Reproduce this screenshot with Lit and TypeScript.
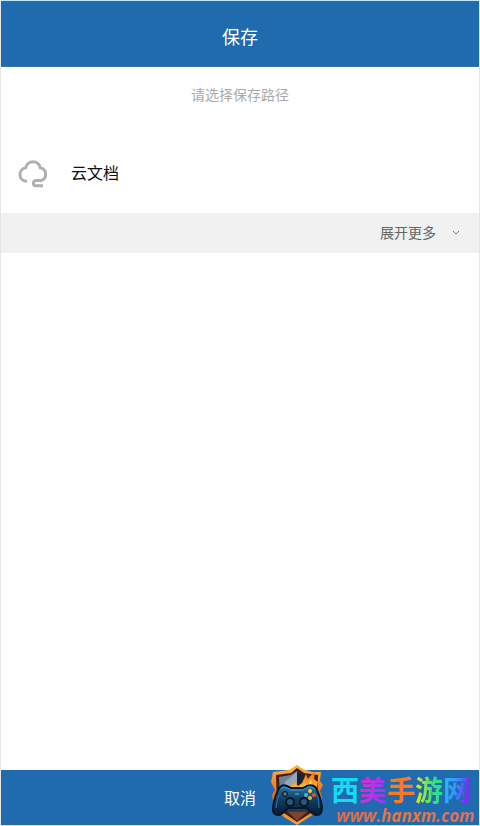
import { LitElement, html, css } from "lit";
import { customElement } from "lit/decorators.js";

@customElement("brand-mark")
class BrandMark extends LitElement {
  static styles = css`
    :host { display: flex; align-items: flex-end; gap: 6px; }
    .shield { width: 56px; height: 60px; display: block; }
    .words { display: flex; flex-direction: column; align-items: flex-end; }
    .name {
      display: flex;
      padding-right: 4px;
      font: 700 28px/36px "Noto Sans CJK SC", sans-serif;
      white-space: nowrap;
    }
    .c1 { color: #10dcf4; }
    .c2 { background: linear-gradient(100deg, #e52bd5, #8a3cf5); }
    .c3 { color: #ff7a1c; }
    .c4 { background: linear-gradient(90deg, #f3e51e, #3fe36b 60%, #20dba8); }
    .c5 { background: linear-gradient(100deg, #20c8f4, #3c8cff 50%, #7a2cf5 80%); }
    .c2, .c4, .c5 { color: transparent; background-clip: text; -webkit-background-clip: text; }
    .site {
      display: block;
      font: italic 700 17px/18px "Open Sans", "Noto Sans", sans-serif;
      color: transparent;
      background: linear-gradient(90deg, #e86a4c, #f5763a 50%, #e5705c);
      background-clip: text;
      -webkit-background-clip: text;
      text-decoration: none;
      white-space: nowrap;
    }
  `;
  render() {
    return html`
      <svg class="shield" viewBox="0 0 56 60" aria-hidden="true">
        <defs>
          <linearGradient id="rim" x1="0" y1="0" x2="0" y2="1">
            <stop offset="0" stop-color="#ffb53c" /><stop offset=".5" stop-color="#f26a16" /><stop offset="1" stop-color="#ffa12e" />
          </linearGradient>
          <linearGradient id="fire" x1="0" y1="0" x2="0" y2="1">
            <stop offset="0" stop-color="#f4680c" /><stop offset="1" stop-color="#ffd04a" />
          </linearGradient>
          <linearGradient id="pad" x1="0" y1="0" x2="0" y2="1">
            <stop offset="0" stop-color="#2d79ae" /><stop offset=".45" stop-color="#134063" /><stop offset="1" stop-color="#071a31" />
          </linearGradient>
        </defs>
        <path d="M28 0 34 4 43 7 52 7 51 16 54 20 51 26 53 32 50 43 42 51 28 60 15 52 5 42 3 30 6 25 2 17 4 7 20 5Z" fill="url(#rim)" />
        <path d="M28 3 35 8 49 10 48 38 42 48 28 57 15 48 8 38 7 10 22 8Z" fill="#421c19" />
        <path d="M28 6 35 10 46 12 45 37 40 46 28 54 17 46 11 37 10 12 22 10Z" fill="#27394c" />
        <path d="M28 6 22 10 10 12 11 30 28 22Z" fill="#6e8296" />
        <path d="M28 7V22L15 30 16 17Z" fill="#98a8b3" />
        <path d="M28 7 40 12 38 24H28Z" fill="#182431" />
        <path d="M15 25 19 20 22 21 26 17 29 21 33 18 37 9 39 14 42 10 46 7 45 14 49 17 46 28 35 25 24 26Z" fill="url(#fire)" />
        <path d="M32 23 36 19 39 21 42 14 43 21 46 23 43 27Z" fill="#ffd85a" />
        <path d="M19 47H38L28 56Z" fill="#7b4332" />
        <path d="M11 22Q14 19 18 21L22 23H34L38 21Q44 19 47 23Q51 30 53 42Q53 50 48 50Q44 50 38 43H19Q12 51 8 50Q3 49 4 42Q6 29 11 22Z" fill="url(#pad)" stroke="#06182b" stroke-width="2" />
        <path d="M12 24Q14 21 18 23L22 25H34L39 22Q43 21 46 24" fill="none" stroke="#4599c9" />
        <path d="M13 29H19M16 26V32" stroke="#09182a" stroke-width="3" />
        <path d="M14 29H18M16 27V31" stroke="#7694ab" />
        <circle cx="21" cy="37" r="5" fill="#07172a" /><circle cx="21" cy="37" r="3" fill="#285779" />
        <circle cx="35" cy="37" r="5" fill="#07172a" /><circle cx="35" cy="37" r="3" fill="#285779" />
        <circle cx="41" cy="26" r="2" fill="#ffc928" /><circle cx="45" cy="30" r="2" fill="#f34e32" />
        <circle cx="37" cy="30" r="2" fill="#43b6e6" /><circle cx="41" cy="33" r="2" fill="#efb33c" />
        <path d="M26 29H30" stroke="#72b8d8" />
        <path d="M7 43Q8 34 10 30M50 43Q50 34 48 30" fill="none" stroke="#2b78a7" />
      </svg>
      <div class="words">
        <span class="name"><span class="c1">西</span><span class="c2">美</span><span class="c3">手</span><span class="c4">游</span><span class="c5">网</span></span>
        <a class="site" href="#">www.hanxm.com</a>
      </div>
    `;
  }
}

@customElement("app-root")
class AppRoot extends LitElement {
  static styles = css`
    :host {
      display: flex;
      flex-direction: column;
      box-sizing: border-box;
      min-height: 100vh;
      border: 1px solid #e6e6e6;
      border-top-color: #bfeafa;
      border-bottom-color: #bfeafa;
      background: #fff;
      font-family: "Noto Sans CJK SC", sans-serif;
    }
    button { border: 0; margin: 0; padding: 0 0 2px; background: none; font: inherit; cursor: pointer; }
    header {
      display: flex;
      align-items: center;
      justify-content: center;
      box-sizing: border-box;
      height: 66px;
      padding-top: 4px;
      background: #1f6bad;
      border-bottom: 1px solid #3a75a8;
    }
    h1 { margin: 0; font-size: 18px; line-height: 26px; font-weight: 400; color: #fff; }
    main { flex: 1; }
    .hint { margin: 0; padding: 17px 0 29px; font-size: 14px; line-height: 20px; color: #aaa; text-align: center; }
    .place {
      display: flex;
      align-items: center;
      gap: 22px;
      width: 100%;
      height: 80px;
      padding: 0 16px 2px;
      font-size: 16px;
      line-height: 24px;
      color: #111;
    }
    .cloud { width: 32px; height: 32px; }
    .more {
      display: flex;
      align-items: center;
      justify-content: flex-end;
      gap: 16px;
      width: 100%;
      height: 40px;
      padding-right: 19px;
      background: #f1f1f1;
      font-size: 14px;
      line-height: 20px;
      color: #666;
    }
    .chevron { width: 8px; height: 8px; }
    footer { position: relative; background: #1f6bad; }
    .cancel { display: block; width: 100%; height: 55px; color: #fff; font-size: 16px; line-height: 24px; }
    brand-mark { position: absolute; right: 4px; bottom: 0; }
  `;
  render() {
    return html`
      <header><h1>保存</h1></header>
      <main>
        <p class="hint">请选择保存路径</p>
        <button class="place">
          <svg class="cloud" viewBox="0 0 32 32" fill="none" stroke="#b0b0b0" stroke-width="3" aria-hidden="true">
            <path d="M10 25.3H9.2A6.8 6.8 0 0 1 8.8 11.8A7.3 7.3 0 0 1 23.2 11.8A6.6 6.6 0 0 1 24 24.6H19A2.6 2.6 0 0 0 19 29.8H26" />
          </svg>
          <span>云文档</span>
        </button>
        <button class="more">
          <span>展开更多</span>
          <svg class="chevron" viewBox="0 0 8 8" fill="none" stroke="#777" aria-hidden="true"><path d="M1 3 4 6 7 3" /></svg>
        </button>
      </main>
      <footer>
        <button class="cancel">取消</button>
        <brand-mark></brand-mark>
      </footer>
    `;
  }
}
